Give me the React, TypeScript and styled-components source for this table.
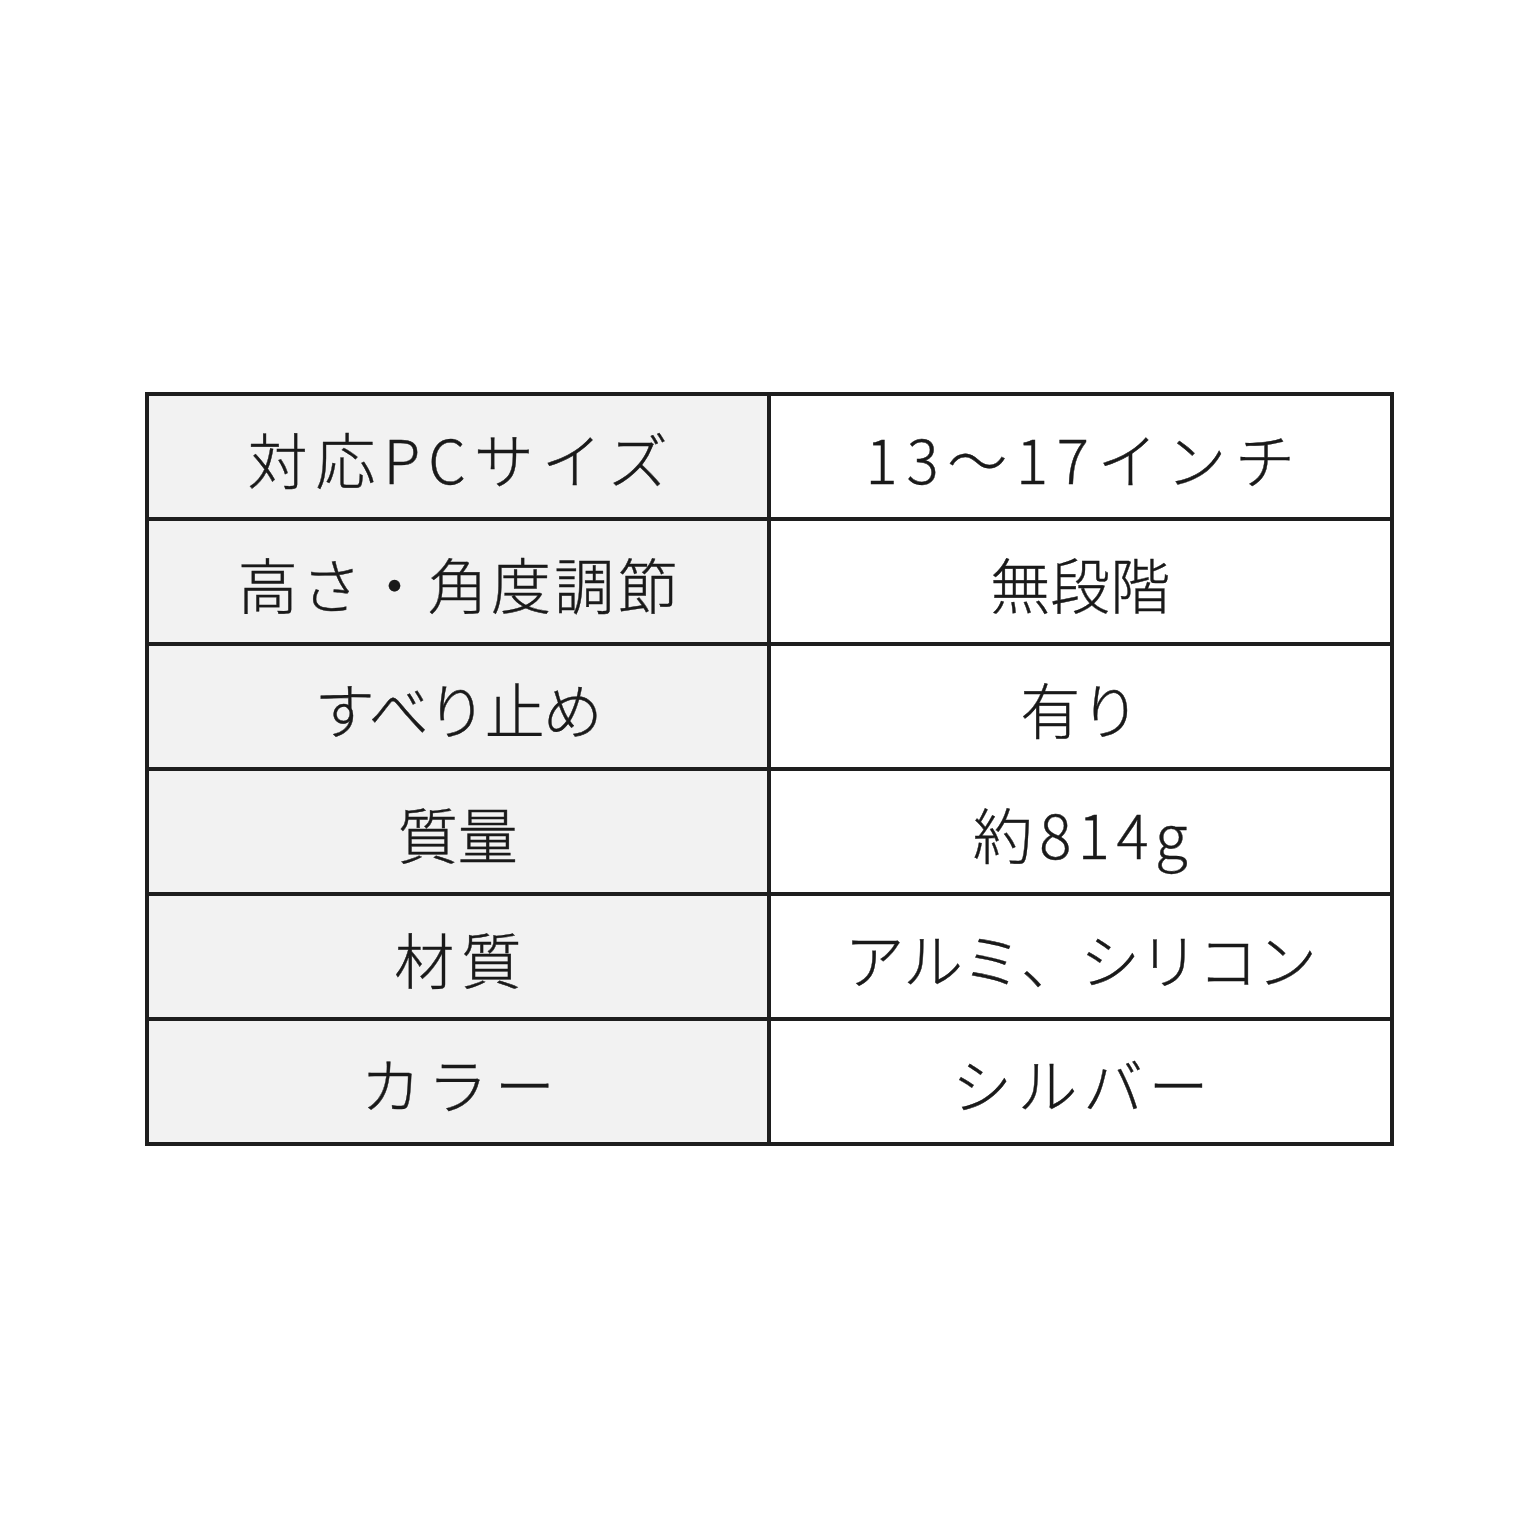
import React from "react";
import styled, { createGlobalStyle } from "styled-components";

const Global = createGlobalStyle`
  html, body { margin: 0; padding: 0; background: #ffffff; }
  body { font-family: "Noto Sans CJK JP", "Noto Sans", sans-serif; }
`;

const Page = styled.div`
  width: 1536px;
  height: 1536px;
  display: flex;
  justify-content: center;
  align-items: flex-start;
  padding-top: 392px;
  box-sizing: border-box;
`;

const Table = styled.div`
  width: 1249px;
  display: grid;
  grid-template-columns: 1fr 1fr;
  grid-auto-rows: 121px;
  gap: 4px;
  padding: 4px;
  box-sizing: border-box;
  background: #1e1e1e;
  margin-left: 2px;
`;

const Cell = styled.div<{ $head?: boolean; $ls: number }>`
  background: ${(p) => (p.$head ? "#f2f2f2" : "#ffffff")};
  display: flex;
  align-items: center;
  justify-content: center;
  font-family: "Noto Sans CJK JP", "Noto Sans", sans-serif;
  font-weight: 300;
  font-size: 60px;
  letter-spacing: ${(p) => p.$ls}px;
  padding-left: ${(p) => p.$ls}px;
  color: #1a1a1a;
  padding-top: 2px;
  box-sizing: border-box;
  white-space: nowrap;
  -webkit-text-stroke: 0.4px #1a1a1a;
`;

type Row = { k: string; kls: number; v: string; vls: number };

const rows: Row[] = [
  { k: "対応PCサイズ", kls: 8, v: "13～17インチ", vls: 8.7 },
  { k: "高さ・角度調節", kls: 3.3, v: "無段階", vls: 0 },
  { k: "すべり止め", kls: -2, v: "有り", vls: 0 },
  { k: "質量", kls: 0, v: "約814g", vls: 6.5 },
  { k: "材質", kls: 7, v: "アルミ、シリコン", vls: -1 },
  { k: "カラー", kls: 7, v: "シルバー", vls: 5.5 },
];

export default function App() {
  return (
    <>
      <Global />
      <Page>
        <Table>
          {rows.map((r) => (
            <React.Fragment key={r.k}>
              <Cell $head $ls={r.kls}>
                {r.k}
              </Cell>
              <Cell $ls={r.vls}>{r.v}</Cell>
            </React.Fragment>
          ))}
        </Table>
      </Page>
    </>
  );
}
